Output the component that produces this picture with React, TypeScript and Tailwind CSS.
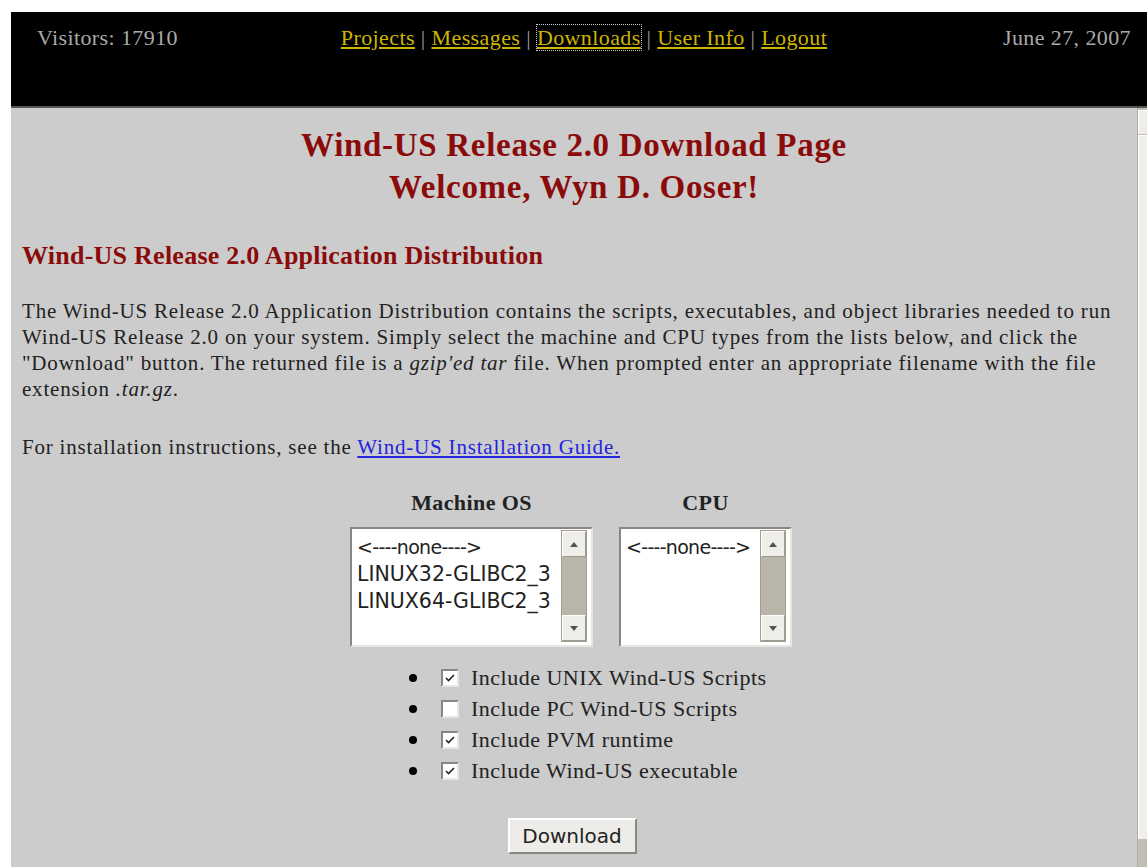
import React from "react";

// Wind-US release download page: black banner, gray content pane with
// selection lists, option checkboxes and a submit button.

const serif = "font-['Liberation_Serif','Times_New_Roman',serif]";
const sans = "font-['DejaVu_Sans','Verdana',sans-serif]";

const navLinks = ["Projects", "Messages", "Downloads", "User Info", "Logout"];

const options = [
  { label: "Include UNIX Wind-US Scripts", checked: true },
  { label: "Include PC Wind-US Scripts", checked: false },
  { label: "Include PVM runtime", checked: true },
  { label: "Include Wind-US executable", checked: true },
];

function ArrowButton({ up }: { up?: boolean }) {
  return (
    <div className="flex h-[26px] items-center justify-center border border-t-white border-l-white border-r-[#9d9a8f] border-b-[#9d9a8f] bg-[#efede8]">
      <svg width="8" height="5" viewBox="0 0 8 5">
        <path d={up ? "M0 5 L4 0 L8 5 Z" : "M0 0 L4 5 L8 0 Z"} fill="#55534d" />
      </svg>
    </div>
  );
}

function ListBox({ items, width }: { items: string[]; width: string }) {
  return (
    <div
      className={`flex h-[120px] ${width} border-2 border-t-[#8a877f] border-l-[#8a877f] border-r-[#e8e6e0] border-b-[#e8e6e0] bg-white`}
    >
      <div className={`flex-1 pl-[5px] pt-[5px] text-[20.5px] leading-[27px] text-[#222] ${sans}`}>
        {items.map((it) => (
          <div key={it} className={it.startsWith("<") ? "text-[19px] tracking-[-0.7px]" : ""}>
            {it}
          </div>
        ))}
      </div>
      <div className="mr-[4px] mt-[1px] mb-[3px] flex w-[26px] flex-col border border-[#a09c90] bg-[#b9b5a9]">
        <ArrowButton up />
        <div className="flex-1" />
        <ArrowButton />
      </div>
    </div>
  );
}

function CheckBox({ checked }: { checked: boolean }) {
  return (
    <div className="flex h-[18px] w-[18px] items-center justify-center border-2 border-t-[#8a877f] border-l-[#8a877f] border-r-[#e8e6e0] border-b-[#e8e6e0] bg-white">
      {checked && (
        <svg width="10" height="8" viewBox="0 0 10 8">
          <path d="M1 4 L3.5 6.5 L9 1" stroke="#222" strokeWidth="1.6" fill="none" />
        </svg>
      )}
    </div>
  );
}

export default function App() {
  return (
    <div className={`h-[867px] overflow-hidden bg-white pl-[11px] pt-[12px] ${serif}`}>
      <header className="flex h-[96px] items-start justify-between border-b-2 border-[#555] bg-black pl-[26px] pr-[16px] pt-[12px] text-[22px] leading-[28px] tracking-[0.4px]">
        <div className="w-[240px] text-[#a9a9a9]">Visitors: 17910</div>
        <nav className="text-[#9a9a9a]">
          {navLinks.map((l, i) => (
            <React.Fragment key={l}>
              {i > 0 && <span> | </span>}
              <a
                href="#"
                className={`text-[#cdb500] underline ${
                  l === "Downloads" ? "outline-1 outline-dotted outline-[#cfcfcf]" : ""
                }`}
              >
                {l}
              </a>
            </React.Fragment>
          ))}
        </nav>
        <div className="w-[240px] text-right text-[#a9a9a9]">June 27, 2007</div>
      </header>

      <div className="flex h-[759px]">
        <main className="flex-1 bg-[#cccccc] px-[11px] text-[#222]">
          <h1 className="mt-[16px] text-center text-[33px] font-bold leading-[42px] tracking-[0.7px] text-[#8b0a0a]">
            Wind-US Release 2.0 Download Page
            <br />
            Welcome, Wyn D. Ooser!
          </h1>

          <h2 className="mt-[32px] text-[26px] font-bold leading-[32px] tracking-[0.25px] text-[#8b0a0a]">
            Wind-US Release 2.0 Application Distribution
          </h2>

          <p className="mt-[26px] text-[21px] leading-[26px] tracking-[0.8px]">
            The Wind-US Release 2.0 Application Distribution contains the scripts, executables, and
            object libraries needed to run Wind-US Release 2.0 on your system. Simply select the
            machine and CPU types from the lists below, and click the "Download" button. The
            returned file is a <i>gzip'ed tar</i> file. When prompted enter an appropriate filename
            with the file extension <i>.tar.gz</i>.
          </p>

          <p className="mt-[32px] text-[21px] leading-[26px] tracking-[0.8px]">
            For installation instructions, see the{" "}
            <a href="#" className="text-[#2323e0] underline">
              Wind-US Installation Guide.
            </a>
          </p>

          <div className="mt-[30px] flex justify-center gap-[26px] pr-[6px]">
            <div className="flex flex-col items-center">
              <div className="text-[22px] font-bold leading-[26px] tracking-[0.4px]">Machine OS</div>
              <div className="mt-[11px]">
                <ListBox
                  width="w-[243px]"
                  items={["<----none---->", "LINUX32-GLIBC2_3", "LINUX64-GLIBC2_3"]}
                />
              </div>
            </div>
            <div className="flex flex-col items-center">
              <div className="text-[22px] font-bold leading-[26px] tracking-[0.4px]">CPU</div>
              <div className="mt-[11px]">
                <ListBox width="w-[173px]" items={["<----none---->"]} />
              </div>
            </div>
          </div>

          <ul className="mt-[15px] ml-[387px] text-[22px] leading-[31px] tracking-[0.5px]">
            {options.map((o) => (
              <li key={o.label} className="flex items-center">
                <span className="h-[8px] w-[8px] rounded-full bg-black" />
                <span className="ml-[24px]">
                  <CheckBox checked={o.checked} />
                </span>
                <span className="ml-[12px]">{o.label}</span>
              </li>
            ))}
          </ul>

          <div className="mt-[32px] flex justify-center pr-[4px]">
            <button
              type="button"
              className={`h-[36px] w-[129px] border-2 border-t-white border-l-white border-r-[#8a877f] border-b-[#8a877f] bg-[#eeece8] text-[20px] text-[#222] ${sans}`}
            >
              Download
            </button>
          </div>
        </main>

        {/* page scrollbar, cut off at the window edge */}
        <div className="flex w-[10px] flex-col border-l border-[#b0ada3] bg-[#c2beb3]">
          <div className="mt-[2px] h-[24px] border-t border-l border-white bg-[#efede8]" />
          <div className="mt-[1px] h-[704px] border-t border-l border-white bg-[#f1efeb]" />
        </div>
      </div>
    </div>
  );
}
